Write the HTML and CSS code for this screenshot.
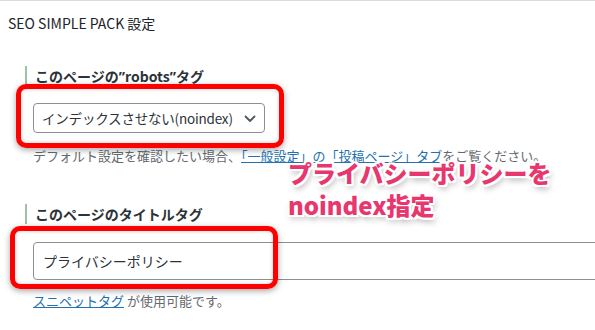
FILE: index.html
```html
<!DOCTYPE html>
<html lang="ja">

<head>
    <meta charset="UTF-8">
    <meta name="viewport" content="width=device-width, initial-scale=1.0">
    <title>SEO SIMPLE PACK 設定</title>
    <link rel="stylesheet" href="styles.css">
</head>

<body>
    <div class="panel">
        <h2 class="panel-title">SEO SIMPLE PACK 設定</h2>

        <div class="field field-robots">
            <h3 class="field-label">このページの<span class="q">”</span>robots<span class="q">”</span>タグ</h3>
            <div class="control">
                <select class="select">
                    <option>インデックスさせない(noindex)</option>
                </select>
                <svg class="chevron" width="12" height="8" viewBox="0 0 12 8">
                    <path d="M1.5 1.5 L6 6 L10.5 1.5" fill="none" stroke="#50575e" stroke-width="1.8" stroke-linecap="round" stroke-linejoin="round"/>
                </svg>
                <div class="mark mark-robots"></div>
            </div>
            <p class="desc">デフォルト設定を確認したい場合、<a href="#">「一般設定」の「投稿ページ」タブ</a>をご覧ください。</p>
            <div class="note">プライバシーポリシーを<br>noindex指定</div>
        </div>

        <div class="field field-title">
            <h3 class="field-label">このページのタイトルタグ</h3>
            <div class="control">
                <input type="text" class="text-input" value="プライバシーポリシー">
                <div class="mark mark-title"></div>
            </div>
            <p class="desc"><a href="#">スニペットタグ</a> が使用可能です。</p>
        </div>
    </div>
</body>

</html>
```

FILE: styles.css
```css
html, body {
    margin: 0;
    height: 100%;
    overflow: hidden;
}

body {
    font-family: "Noto Sans CJK JP", "Noto Sans", sans-serif;
    background-color: white;
    color: #1d2327;
}

.panel {
    border-top: 1px solid #dcdcde;
}

.panel-title {
    margin: 0;
    padding: 12px 8px 0;
    font-size: 14px;
    font-weight: normal;
    line-height: 20px;
}

.field {
    position: relative;
    padding-left: 25px;
}

.field-label {
    margin: 0;
    padding-left: 8px;
    border-left: 2px solid #a3bfa5;
    font-size: 14px;
    font-weight: bold;
    line-height: 20px;
    color: #2c3338;
}

.field-label .q {
    font-family: "Noto Sans", sans-serif;
}

.field-robots .field-label {
    margin-top: 33px;
}

.field-title .field-label {
    margin-top: 38px;
}

.control {
    position: relative;
    margin-left: 8px;
}

.field-robots .control {
    margin-top: 16px;
    width: 232px;
}

.field-title .control {
    margin-top: 18px;
}

.select {
    -webkit-appearance: none;
    appearance: none;
    display: block;
    width: 232px;
    height: 30px;
    padding: 0 20px 0 8px;
    border: 1px solid #8c8f94;
    border-radius: 4px;
    background: white;
    font-family: inherit;
    font-size: 13.5px;
    letter-spacing: -0.2px;
    color: #2c3338;
}

.chevron {
    position: absolute;
    right: 9px;
    top: 12px;
}

.text-input {
    display: block;
    box-sizing: border-box;
    width: 600px;
    height: 38px;
    padding: 0 9px;
    border: 1px solid #8c8f94;
    border-radius: 4px;
    font-family: inherit;
    font-size: 14px;
    color: #2c3338;
}

.desc {
    margin: 13px 0 0 8px;
    font-size: 13px;
    line-height: 20px;
    color: #646970;
}

.field-title .desc {
    margin-top: 11px;
}

.desc a {
    color: #2271b1;
}

/* annotation overlays */
.mark {
    position: absolute;
    box-sizing: border-box;
    border: 5px solid #f00;
    border-radius: 10px;
    box-shadow: 0 2px 6px rgba(0, 0, 0, 0.35), inset 0 0 4px rgba(0, 0, 0, 0.2);
}

.mark-robots {
    left: -17px;
    top: -19px;
    width: 268px;
    height: 64px;
}

.mark-title {
    left: -23px;
    top: -16px;
    width: 268px;
    height: 63px;
}

.note {
    position: absolute;
    left: 288px;
    top: 91px;
    font-size: 24px;
    font-weight: 900;
    line-height: 32px;
    color: #e8366e;
    text-shadow:
        2px 0 0 white, -2px 0 0 white, 0 2px 0 white, 0 -2px 0 white,
        2px 2px 0 white, -2px -2px 0 white, 2px -2px 0 white, -2px 2px 0 white,
        2px 4px 6px rgba(0, 0, 0, 0.35);
}
```
